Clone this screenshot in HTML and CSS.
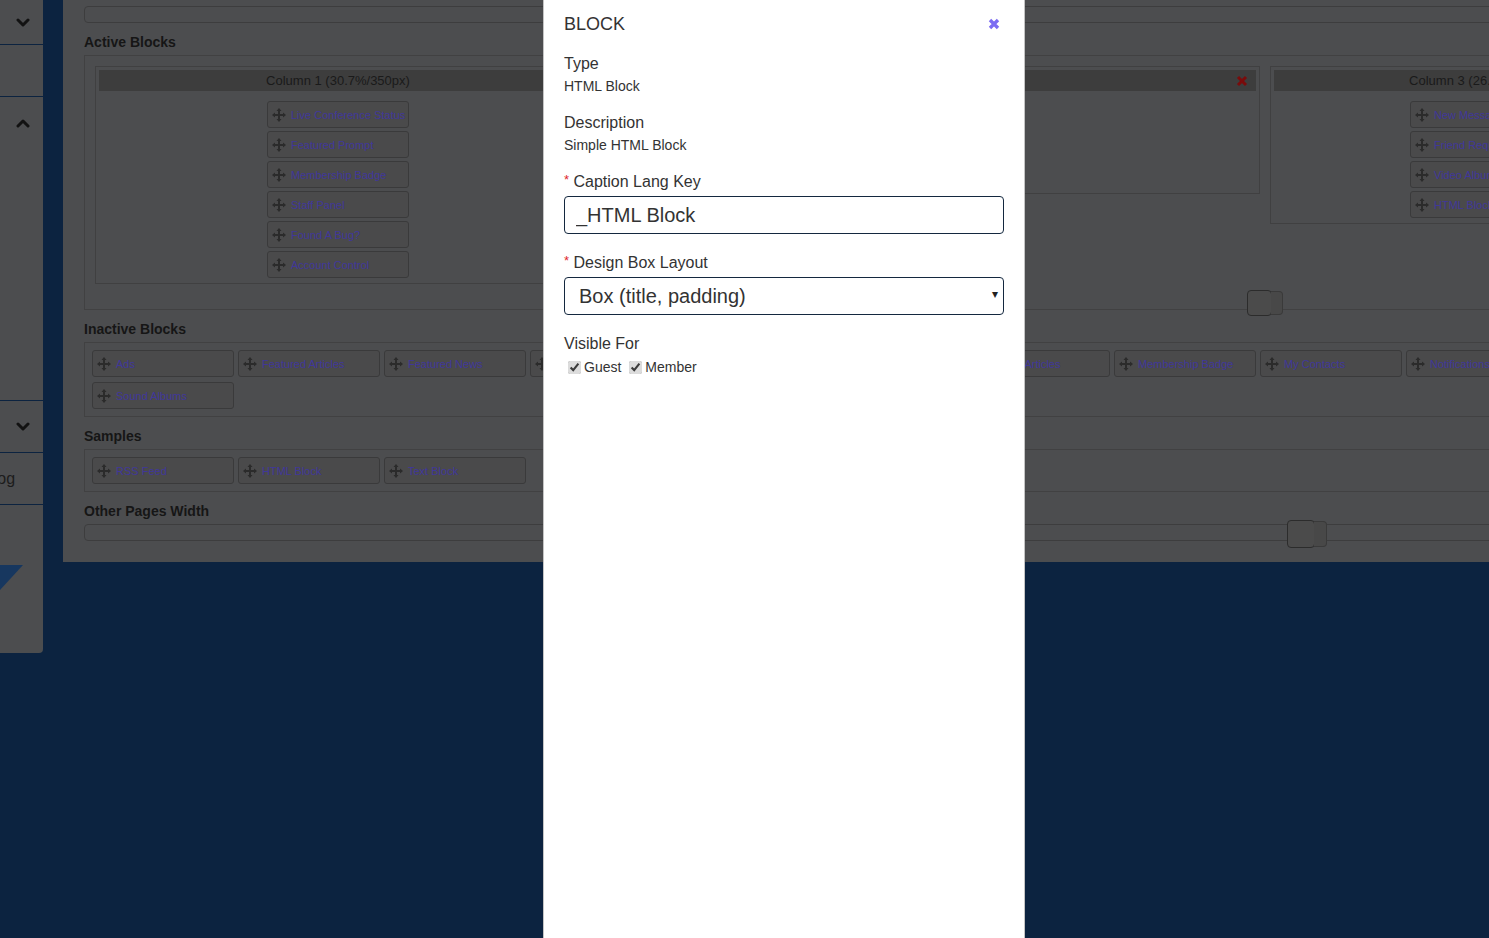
FILE: index.html
```html
<!DOCTYPE html>
<html lang="en">
<head>
    <meta charset="UTF-8">
    <meta name="viewport" content="width=device-width, initial-scale=1.0">
    <title>Page Builder - Block</title>
    <link rel="stylesheet" href="styles.css">
</head>
<body>
    <div class="page">
        <div class="sidebar">
            <div class="side-seg seg-1">
                <svg class="chevron" width="14" height="9" viewBox="0 0 14 9"><path d="M2 2 L7 7 L12 2" /></svg>
            </div>
            <div class="side-seg seg-2"></div>
            <div class="side-seg seg-3">
                <svg class="chevron" width="14" height="9" viewBox="0 0 14 9"><path d="M2 7 L7 2 L12 7" /></svg>
            </div>
            <div class="side-seg seg-4">
                <svg class="chevron" width="14" height="9" viewBox="0 0 14 9"><path d="M2 2 L7 7 L12 2" /></svg>
            </div>
            <div class="side-seg seg-5"><span class="side-text">Blog</span></div>
            <div class="side-seg seg-6">
                <svg class="side-flag" width="23" height="25" viewBox="0 0 23 25"><path d="M0 0 H23 L0 25 Z" /></svg>
            </div>
        </div>

        <div class="main">
            <div class="field-bar"></div>

            <h3 class="section-title">Active Blocks</h3>
            <div class="box active-box">
                <div class="columns">
                    <div class="column col-1">
                        <div class="column-head">Column 1 (30.7%/350px)</div>
                        <div class="column-items">
                            <div class="block-item"><svg class="move" viewBox="0 0 14 14"><path d="M7 0 L9.5 3 H8 V6 H11 V4.5 L14 7 L11 9.5 V8 H8 V11 H9.5 L7 14 L4.5 11 H6 V8 H3 V9.5 L0 7 L3 4.5 V6 H6 V3 H4.5 Z" /></svg><a>Live Conference Status</a></div>
                            <div class="block-item"><svg class="move" viewBox="0 0 14 14"><path d="M7 0 L9.5 3 H8 V6 H11 V4.5 L14 7 L11 9.5 V8 H8 V11 H9.5 L7 14 L4.5 11 H6 V8 H3 V9.5 L0 7 L3 4.5 V6 H6 V3 H4.5 Z" /></svg><a>Featured Prompt</a></div>
                            <div class="block-item"><svg class="move" viewBox="0 0 14 14"><path d="M7 0 L9.5 3 H8 V6 H11 V4.5 L14 7 L11 9.5 V8 H8 V11 H9.5 L7 14 L4.5 11 H6 V8 H3 V9.5 L0 7 L3 4.5 V6 H6 V3 H4.5 Z" /></svg><a>Membership Badge</a></div>
                            <div class="block-item"><svg class="move" viewBox="0 0 14 14"><path d="M7 0 L9.5 3 H8 V6 H11 V4.5 L14 7 L11 9.5 V8 H8 V11 H9.5 L7 14 L4.5 11 H6 V8 H3 V9.5 L0 7 L3 4.5 V6 H6 V3 H4.5 Z" /></svg><a>Staff Panel</a></div>
                            <div class="block-item"><svg class="move" viewBox="0 0 14 14"><path d="M7 0 L9.5 3 H8 V6 H11 V4.5 L14 7 L11 9.5 V8 H8 V11 H9.5 L7 14 L4.5 11 H6 V8 H3 V9.5 L0 7 L3 4.5 V6 H6 V3 H4.5 Z" /></svg><a>Found A Bug?</a></div>
                            <div class="block-item"><svg class="move" viewBox="0 0 14 14"><path d="M7 0 L9.5 3 H8 V6 H11 V4.5 L14 7 L11 9.5 V8 H8 V11 H9.5 L7 14 L4.5 11 H6 V8 H3 V9.5 L0 7 L3 4.5 V6 H6 V3 H4.5 Z" /></svg><a>Account Control</a></div>
                        </div>
                    </div>
                    <div class="column col-2">
                        <div class="column-head">Column 2 (43.1%/490px)<svg class="col-remove" width="12" height="12" viewBox="0 0 12 12"><path d="M2 2 L10 10 M10 2 L2 10" /></svg></div>
                        <div class="column-items empty"></div>
                    </div>
                    <div class="column col-3">
                        <div class="column-head">Column 3 (26.2%/300px)</div>
                        <div class="column-items">
                            <div class="block-item"><svg class="move" viewBox="0 0 14 14"><path d="M7 0 L9.5 3 H8 V6 H11 V4.5 L14 7 L11 9.5 V8 H8 V11 H9.5 L7 14 L4.5 11 H6 V8 H3 V9.5 L0 7 L3 4.5 V6 H6 V3 H4.5 Z" /></svg><a>New Messages</a></div>
                            <div class="block-item"><svg class="move" viewBox="0 0 14 14"><path d="M7 0 L9.5 3 H8 V6 H11 V4.5 L14 7 L11 9.5 V8 H8 V11 H9.5 L7 14 L4.5 11 H6 V8 H3 V9.5 L0 7 L3 4.5 V6 H6 V3 H4.5 Z" /></svg><a>Friend Requests</a></div>
                            <div class="block-item"><svg class="move" viewBox="0 0 14 14"><path d="M7 0 L9.5 3 H8 V6 H11 V4.5 L14 7 L11 9.5 V8 H8 V11 H9.5 L7 14 L4.5 11 H6 V8 H3 V9.5 L0 7 L3 4.5 V6 H6 V3 H4.5 Z" /></svg><a>Video Albums</a></div>
                            <div class="block-item"><svg class="move" viewBox="0 0 14 14"><path d="M7 0 L9.5 3 H8 V6 H11 V4.5 L14 7 L11 9.5 V8 H8 V11 H9.5 L7 14 L4.5 11 H6 V8 H3 V9.5 L0 7 L3 4.5 V6 H6 V3 H4.5 Z" /></svg><a>HTML Block</a></div>
                        </div>
                    </div>
                </div>
                <div class="slider-handle active-handle"><span class="handle-back"></span><span class="handle-knob"></span></div>
            </div>

            <h3 class="section-title">Inactive Blocks</h3>
            <div class="box item-box">
                <div class="block-item"><svg class="move" viewBox="0 0 14 14"><path d="M7 0 L9.5 3 H8 V6 H11 V4.5 L14 7 L11 9.5 V8 H8 V11 H9.5 L7 14 L4.5 11 H6 V8 H3 V9.5 L0 7 L3 4.5 V6 H6 V3 H4.5 Z" /></svg><a>Ads</a></div>
                <div class="block-item"><svg class="move" viewBox="0 0 14 14"><path d="M7 0 L9.5 3 H8 V6 H11 V4.5 L14 7 L11 9.5 V8 H8 V11 H9.5 L7 14 L4.5 11 H6 V8 H3 V9.5 L0 7 L3 4.5 V6 H6 V3 H4.5 Z" /></svg><a>Featured Articles</a></div>
                <div class="block-item"><svg class="move" viewBox="0 0 14 14"><path d="M7 0 L9.5 3 H8 V6 H11 V4.5 L14 7 L11 9.5 V8 H8 V11 H9.5 L7 14 L4.5 11 H6 V8 H3 V9.5 L0 7 L3 4.5 V6 H6 V3 H4.5 Z" /></svg><a>Featured News</a></div>
                <div class="block-item"><svg class="move" viewBox="0 0 14 14"><path d="M7 0 L9.5 3 H8 V6 H11 V4.5 L14 7 L11 9.5 V8 H8 V11 H9.5 L7 14 L4.5 11 H6 V8 H3 V9.5 L0 7 L3 4.5 V6 H6 V3 H4.5 Z" /></svg><a>Featured Photos</a></div>
                <div class="block-item"><svg class="move" viewBox="0 0 14 14"><path d="M7 0 L9.5 3 H8 V6 H11 V4.5 L14 7 L11 9.5 V8 H8 V11 H9.5 L7 14 L4.5 11 H6 V8 H3 V9.5 L0 7 L3 4.5 V6 H6 V3 H4.5 Z" /></svg><a>Forum Posts</a></div>
                <div class="block-item"><svg class="move" viewBox="0 0 14 14"><path d="M7 0 L9.5 3 H8 V6 H11 V4.5 L14 7 L11 9.5 V8 H8 V11 H9.5 L7 14 L4.5 11 H6 V8 H3 V9.5 L0 7 L3 4.5 V6 H6 V3 H4.5 Z" /></svg><a>Groups</a></div>
                <div class="block-item"><svg class="move" viewBox="0 0 14 14"><path d="M7 0 L9.5 3 H8 V6 H11 V4.5 L14 7 L11 9.5 V8 H8 V11 H9.5 L7 14 L4.5 11 H6 V8 H3 V9.5 L0 7 L3 4.5 V6 H6 V3 H4.5 Z" /></svg><a>Latest Articles</a></div>
                <div class="block-item"><svg class="move" viewBox="0 0 14 14"><path d="M7 0 L9.5 3 H8 V6 H11 V4.5 L14 7 L11 9.5 V8 H8 V11 H9.5 L7 14 L4.5 11 H6 V8 H3 V9.5 L0 7 L3 4.5 V6 H6 V3 H4.5 Z" /></svg><a>Membership Badge</a></div>
                <div class="block-item"><svg class="move" viewBox="0 0 14 14"><path d="M7 0 L9.5 3 H8 V6 H11 V4.5 L14 7 L11 9.5 V8 H8 V11 H9.5 L7 14 L4.5 11 H6 V8 H3 V9.5 L0 7 L3 4.5 V6 H6 V3 H4.5 Z" /></svg><a>My Contacts</a></div>
                <div class="block-item"><svg class="move" viewBox="0 0 14 14"><path d="M7 0 L9.5 3 H8 V6 H11 V4.5 L14 7 L11 9.5 V8 H8 V11 H9.5 L7 14 L4.5 11 H6 V8 H3 V9.5 L0 7 L3 4.5 V6 H6 V3 H4.5 Z" /></svg><a>Notifications</a></div>
                <div class="block-item"><svg class="move" viewBox="0 0 14 14"><path d="M7 0 L9.5 3 H8 V6 H11 V4.5 L14 7 L11 9.5 V8 H8 V11 H9.5 L7 14 L4.5 11 H6 V8 H3 V9.5 L0 7 L3 4.5 V6 H6 V3 H4.5 Z" /></svg><a>Photo Albums</a></div>
                <div class="block-item"><svg class="move" viewBox="0 0 14 14"><path d="M7 0 L9.5 3 H8 V6 H11 V4.5 L14 7 L11 9.5 V8 H8 V11 H9.5 L7 14 L4.5 11 H6 V8 H3 V9.5 L0 7 L3 4.5 V6 H6 V3 H4.5 Z" /></svg><a>Sound Albums</a></div>
            </div>

            <h3 class="section-title">Samples</h3>
            <div class="box item-box">
                <div class="block-item"><svg class="move" viewBox="0 0 14 14"><path d="M7 0 L9.5 3 H8 V6 H11 V4.5 L14 7 L11 9.5 V8 H8 V11 H9.5 L7 14 L4.5 11 H6 V8 H3 V9.5 L0 7 L3 4.5 V6 H6 V3 H4.5 Z" /></svg><a>RSS Feed</a></div>
                <div class="block-item"><svg class="move" viewBox="0 0 14 14"><path d="M7 0 L9.5 3 H8 V6 H11 V4.5 L14 7 L11 9.5 V8 H8 V11 H9.5 L7 14 L4.5 11 H6 V8 H3 V9.5 L0 7 L3 4.5 V6 H6 V3 H4.5 Z" /></svg><a>HTML Block</a></div>
                <div class="block-item"><svg class="move" viewBox="0 0 14 14"><path d="M7 0 L9.5 3 H8 V6 H11 V4.5 L14 7 L11 9.5 V8 H8 V11 H9.5 L7 14 L4.5 11 H6 V8 H3 V9.5 L0 7 L3 4.5 V6 H6 V3 H4.5 Z" /></svg><a>Text Block</a></div>
            </div>

            <h3 class="section-title">Other Pages Width</h3>
            <div class="field-bar width-track">
                <div class="slider-handle width-handle"><span class="handle-back"></span><span class="handle-knob"></span></div>
            </div>
        </div>
    </div>

    <div class="modal">
        <div class="modal-head">
            <h2>BLOCK</h2>
            <svg class="modal-close" width="12" height="12" viewBox="0 0 12 12"><path d="M2 2 L10 10 M10 2 L2 10" /></svg>
        </div>

        <div class="form-group group-type">
            <div class="form-label">Type</div>
            <div class="form-value">HTML Block</div>
        </div>

        <div class="form-group group-desc">
            <div class="form-label">Description</div>
            <div class="form-value">Simple HTML Block</div>
        </div>

        <div class="form-group">
            <label class="form-label" for="caption"><span class="required">*</span> Caption Lang Key</label>
            <input class="form-input" type="text" id="caption" value="_HTML Block">
        </div>

        <div class="form-group">
            <label class="form-label" for="layout"><span class="required">*</span> Design Box Layout</label>
            <div class="select-wrap">
                <select class="form-input form-select" id="layout">
                    <option>Box (title, padding)</option>
                    <option>Box (title, no padding)</option>
                    <option>No box</option>
                </select>
                <span class="select-arrow">&#9662;</span>
            </div>
        </div>

        <div class="form-group">
            <div class="form-label">Visible For</div>
            <div class="checks">
                <label class="check"><input type="checkbox" checked><span>Guest</span></label>
                <label class="check"><input type="checkbox" checked><span>Member</span></label>
            </div>
        </div>
    </div>
</body>
</html>
```

FILE: styles.css
```css
:root {
    --navy: #0c2340;
    --panel: #4c4d4f;
    --line: #3d3d3e;
    --item-bg: #4a4a4b;
    --item-border: #3a3a3b;
    --link: #40379a;
    --text-dark: #161616;
    --modal-text: #333333;
}

body {
    margin: 0;
    height: 938px;
    overflow: hidden;
    background: var(--navy);
    font-family: "Liberation Sans", Arial, sans-serif;
}

.page {
    display: flex;
    align-items: flex-start;
    gap: 20px;
}

/* left menu, mostly off screen */
.sidebar {
    flex: none;
    width: 43px;
}

.side-seg {
    box-sizing: border-box;
    background: var(--panel);
    border-bottom: 1px solid var(--navy);
    display: flex;
    justify-content: center;
    align-items: center;
    padding-left: 2px;
}

.seg-1 { height: 45px; }
.seg-2 { height: 52px; }
.seg-3 { height: 304px; align-items: flex-start; padding-top: 22px; }
.seg-4 { height: 52px; }
.seg-5 { height: 52px; justify-content: flex-start; padding-left: 0; }
.seg-6 {
    height: 148px;
    border-bottom: none;
    border-bottom-right-radius: 4px;
    align-items: flex-start;
    justify-content: flex-start;
    padding: 60px 0 0;
}

.chevron path {
    fill: none;
    stroke: #121212;
    stroke-width: 3;
    stroke-linecap: round;
    stroke-linejoin: round;
}

.side-text {
    margin-left: -17px;
    font-size: 16px;
    color: #1c1c1c;
}

.side-flag path {
    fill: #17375f;
}

/* main builder panel */
.main {
    flex: none;
    box-sizing: border-box;
    width: 1680px;
    height: 562px;
    padding: 0 21px;
    background: var(--panel);
}

.field-bar {
    box-sizing: border-box;
    height: 17px;
    margin-top: 6px;
    border: 1px solid var(--line);
    border-radius: 4px;
}

.section-title {
    margin: 11px 0 4px;
    font-size: 14px;
    line-height: 17px;
    font-weight: bold;
    color: var(--text-dark);
}

.box {
    position: relative;
    border: 1px solid #414142;
}

.active-box {
    height: 255px;
    box-sizing: border-box;
    padding: 10px;
}

.columns {
    display: flex;
    align-items: flex-start;
    gap: 10px;
}

.column {
    flex: none;
    box-sizing: border-box;
    border: 1px solid #404041;
    padding: 3px 3px 5px;
}

.col-1 { width: 486px; }
.col-2 { width: 669px; }
.col-3 { width: 422px; }

.column-head {
    position: relative;
    height: 21px;
    line-height: 21px;
    background: #3d3d3d;
    text-align: center;
    font-size: 13px;
    color: #1a1a1a;
}

.col-2 .column-head {
    color: transparent;
}

.col-remove {
    position: absolute;
    right: 8px;
    top: 5px;
}

.col-remove path {
    stroke: #7a0b0b;
    stroke-width: 3;
}

.column-items {
    display: flex;
    flex-direction: column;
    align-items: center;
    gap: 3px;
    margin-top: 10px;
}

.column-items.empty {
    height: 87px;
}

.block-item {
    box-sizing: border-box;
    width: 142px;
    height: 27px;
    display: flex;
    align-items: center;
    gap: 5px;
    padding-left: 4px;
    background: var(--item-bg);
    border: 1px solid var(--item-border);
    border-radius: 3px;
    white-space: nowrap;
    overflow: hidden;
}

.block-item a {
    font-size: 11px;
    color: var(--link);
}

.move {
    flex: none;
    width: 14px;
    height: 14px;
}

.move path {
    fill: #2b2b2b;
}

.item-box {
    display: flex;
    flex-wrap: wrap;
    gap: 5px 4px;
    padding: 7px;
}

/* column resize / width sliders */
.slider-handle {
    position: absolute;
    display: flex;
}

.handle-knob {
    order: 1;
    box-sizing: border-box;
    width: 25px;
    height: 26px;
    background: #4b4b4b;
    border: 1px solid #2c2c2c;
    border-radius: 4px;
}

.handle-back {
    order: 2;
    box-sizing: border-box;
    width: 12px;
    height: 24px;
    margin: 1px 0 0 -1px;
    background: #484848;
    border: 1px solid #3a3a3a;
    border-left: none;
    border-radius: 0 4px 4px 0;
}

.active-handle {
    left: 1162px;
    top: 234px;
}

.width-track {
    position: relative;
    margin-top: 0;
}

.width-handle {
    left: 1202px;
    top: -5px;
}

.width-handle .handle-knob {
    width: 28px;
    height: 28px;
}

.width-handle .handle-back {
    height: 26px;
    width: 13px;
}

/* modal dialog */
.modal {
    position: absolute;
    left: 543px;
    top: 0;
    box-sizing: border-box;
    width: 482px;
    height: 938px;
    padding: 13px 20px 0;
    background: #ffffff;
    border-left: 1px solid #c4c4c4;
    border-right: 1px solid #c4c4c4;
    color: var(--modal-text);
}

.modal-head {
    display: flex;
    justify-content: space-between;
    align-items: center;
    margin-bottom: 19px;
}

.modal-head h2 {
    margin: 0;
    font-size: 18px;
    line-height: 22px;
    font-weight: normal;
}

.modal-close {
    margin-right: 4px;
}

.modal-close path {
    stroke: #7b6cf2;
    stroke-width: 3.4;
}

.form-group {
    margin-bottom: 17px;
}

.group-type {
    margin-bottom: 18px;
}

.group-desc {
    margin-bottom: 16px;
}

.form-label {
    display: block;
    font-size: 16px;
    line-height: 20px;
}

.required {
    color: #e0262b;
    font-size: 13px;
    vertical-align: 3px;
}

.form-value {
    margin-top: 3px;
    font-size: 14px;
    line-height: 18px;
}

.form-input {
    display: block;
    box-sizing: border-box;
    width: 440px;
    height: 38px;
    margin-top: 4px;
    margin-bottom: 17px;
    padding: 0 11px;
    border: 1px solid #14283f;
    border-radius: 4px;
    background: #ffffff;
    font-family: "Liberation Sans", Arial, sans-serif;
    font-size: 20px;
    color: var(--modal-text);
    outline: none;
}

.form-group:has(.form-input) {
    margin-bottom: 0;
}

.select-wrap {
    position: relative;
}

.form-select {
    appearance: none;
    margin-bottom: 19px;
    padding-left: 14px;
}

.select-arrow {
    position: absolute;
    right: 6px;
    top: 10px;
    font-size: 12px;
    color: #222;
}

.checks {
    display: flex;
    gap: 4px;
    margin-top: 4px;
    font-size: 14px;
    line-height: 18px;
}

.check {
    display: flex;
    align-items: center;
    gap: 3px;
}

.check input {
    width: 13px;
    height: 13px;
    margin: 0 0 0 4px;
    accent-color: #dcdcdc;
}
```
